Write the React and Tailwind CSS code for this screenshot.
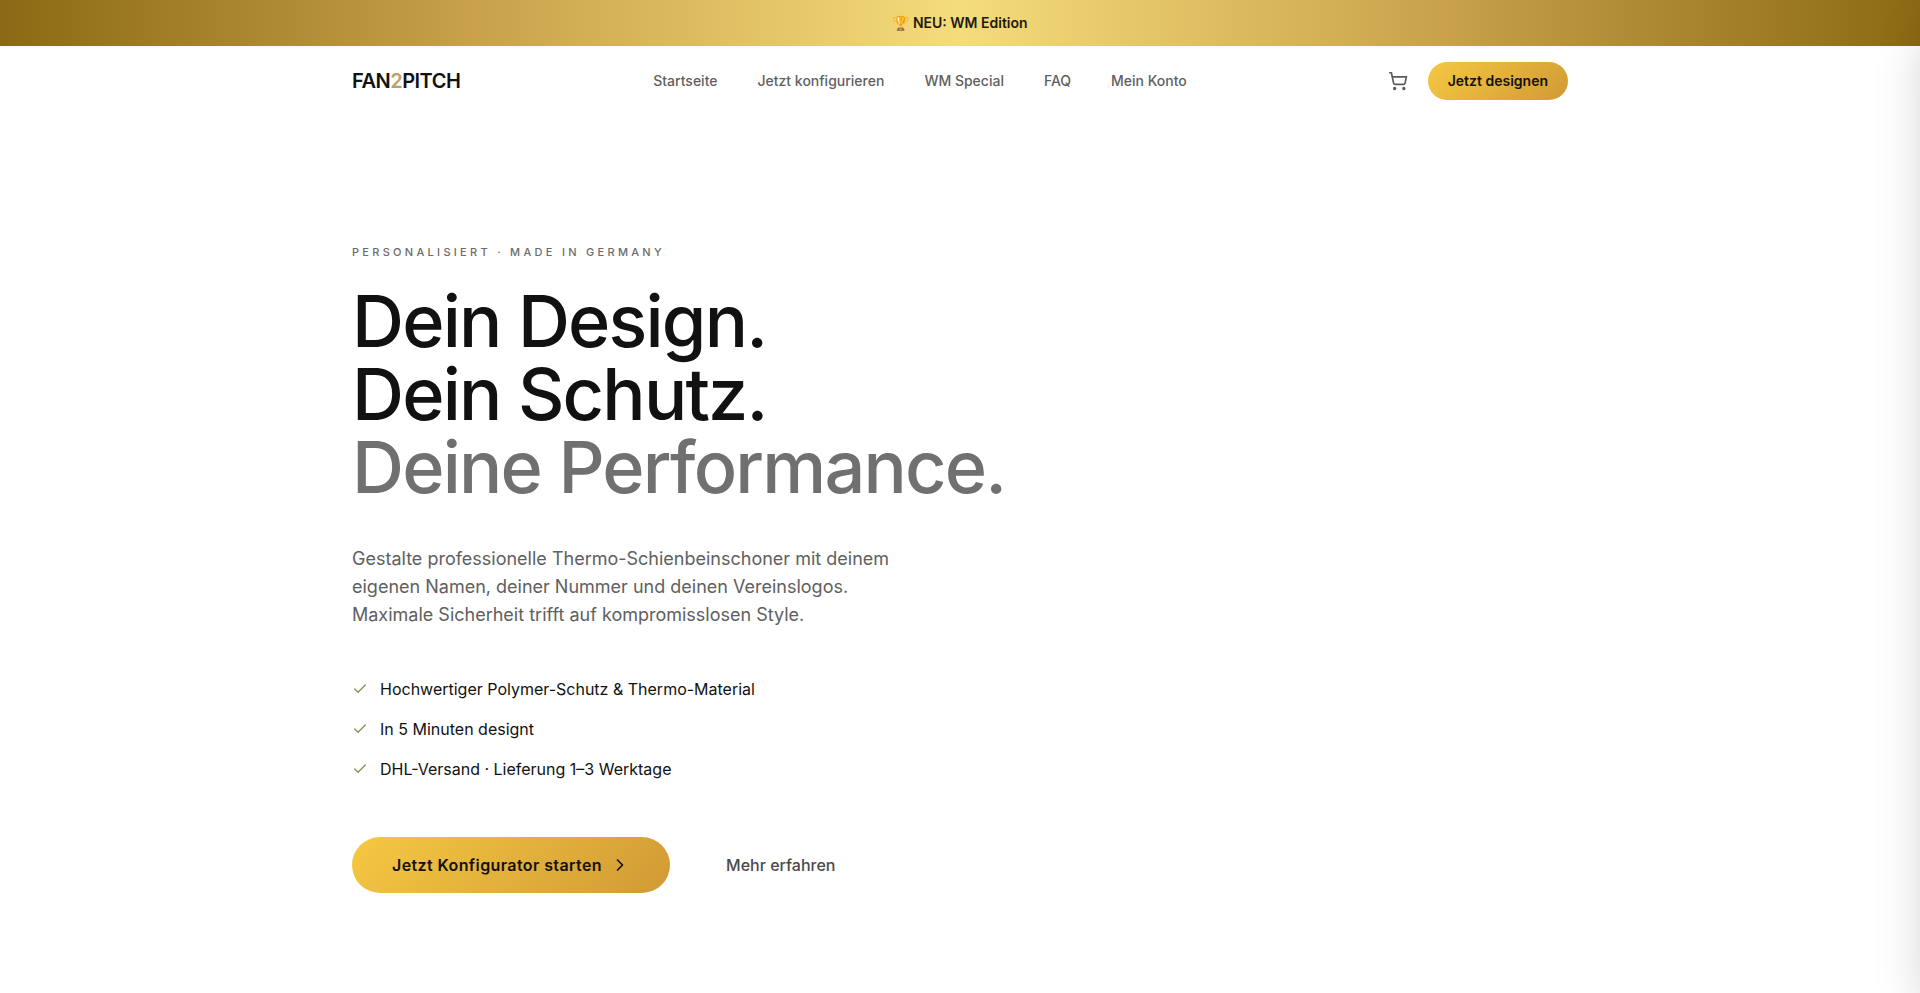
import { Check, ChevronRight, ShoppingCart } from "lucide-react";

const links = ["Startseite", "Jetzt konfigurieren", "WM Special", "FAQ", "Mein Konto"];

const benefits = [
  "Hochwertiger Polymer-Schutz & Thermo-Material",
  "In 5 Minuten designt",
  "DHL-Versand · Lieferung 1–3 Werktage",
];

function Banner() {
  return (
    <a
      href="#wm"
      className="block bg-[linear-gradient(90deg,#8b6914_0%,#c9a24b_25%,#f5dc7a_50%,#c9a24b_75%,#8b6914_100%)] py-3 text-center text-sm leading-[22px] font-semibold text-[#1f1a10]"
    >
      🏆 NEU: WM Edition
    </a>
  );
}

function Header() {
  return (
    <header className="bg-white">
      <div className="mx-auto flex max-w-7xl items-center justify-between px-8 py-4">
        <a href="#" className="text-xl leading-7 font-semibold tracking-tight">
          FAN<span className="text-[#b8a070]">2</span>PITCH
        </a>
        <nav className="flex items-center gap-10 text-sm font-medium text-[#5f5f5f]">
          {links.map((label) => (
            <a key={label} href="#">
              {label}
            </a>
          ))}
        </nav>
        <div className="flex items-center gap-3">
          <button type="button" aria-label="Warenkorb" className="p-2 text-[#5a5a5a]">
            <ShoppingCart size={20} strokeWidth={2} />
          </button>
          <a
            href="#"
            className="rounded-full bg-[linear-gradient(135deg,#f5c842,#d19a35)] px-5 py-2 text-sm leading-[22px] font-semibold"
          >
            Jetzt designen
          </a>
        </div>
      </div>
    </header>
  );
}

function Hero() {
  return (
    <main className="mx-auto max-w-7xl px-8 pt-32 pb-24">
      <p className="text-[11px] leading-4 font-medium tracking-[0.3em] text-[#6b6b6b] uppercase">
        Personalisiert · Made in Germany
      </p>
      <h1 className="mt-6 text-[72px] leading-[73px] font-medium tracking-tight">
        Dein Design.
        <br />
        Dein Schutz.
        <br />
        <span className="text-[#707070]">Deine Performance.</span>
      </h1>
      <p className="mt-[42px] max-w-xl text-lg leading-7 text-[#606060]">
        Gestalte professionelle Thermo-Schienbeinschoner mit deinem eigenen Namen, deiner Nummer
        und deinen Vereinslogos. Maximale Sicherheit trifft auf kompromisslosen Style.
      </p>
      <ul className="mt-12 flex flex-col gap-4">
        {benefits.map((text) => (
          <li key={text} className="flex items-center gap-3 text-base">
            <Check size={16} strokeWidth={2} className="text-[#8f8f4f]" />
            {text}
          </li>
        ))}
      </ul>
      <div className="mt-14 flex items-center gap-4">
        <a
          href="#"
          className="flex items-center gap-2 rounded-full bg-[linear-gradient(135deg,#f5c842,#d19a35)] px-10 py-4 text-base font-semibold tracking-wide"
        >
          Jetzt Konfigurator starten
          <ChevronRight size={20} strokeWidth={2} />
        </a>
        <a href="#" className="px-10 py-4 text-base font-medium text-[#4a4a4a]">
          Mehr erfahren
        </a>
      </div>
    </main>
  );
}

export default function App() {
  return (
    <div className="min-h-screen bg-white font-['Inter',sans-serif] text-[#111111] antialiased">
      <Banner />
      <Header />
      <Hero />
      <aside aria-hidden="true" className="fixed inset-y-0 left-full w-full max-w-md bg-white shadow-2xl" />
    </div>
  );
}
